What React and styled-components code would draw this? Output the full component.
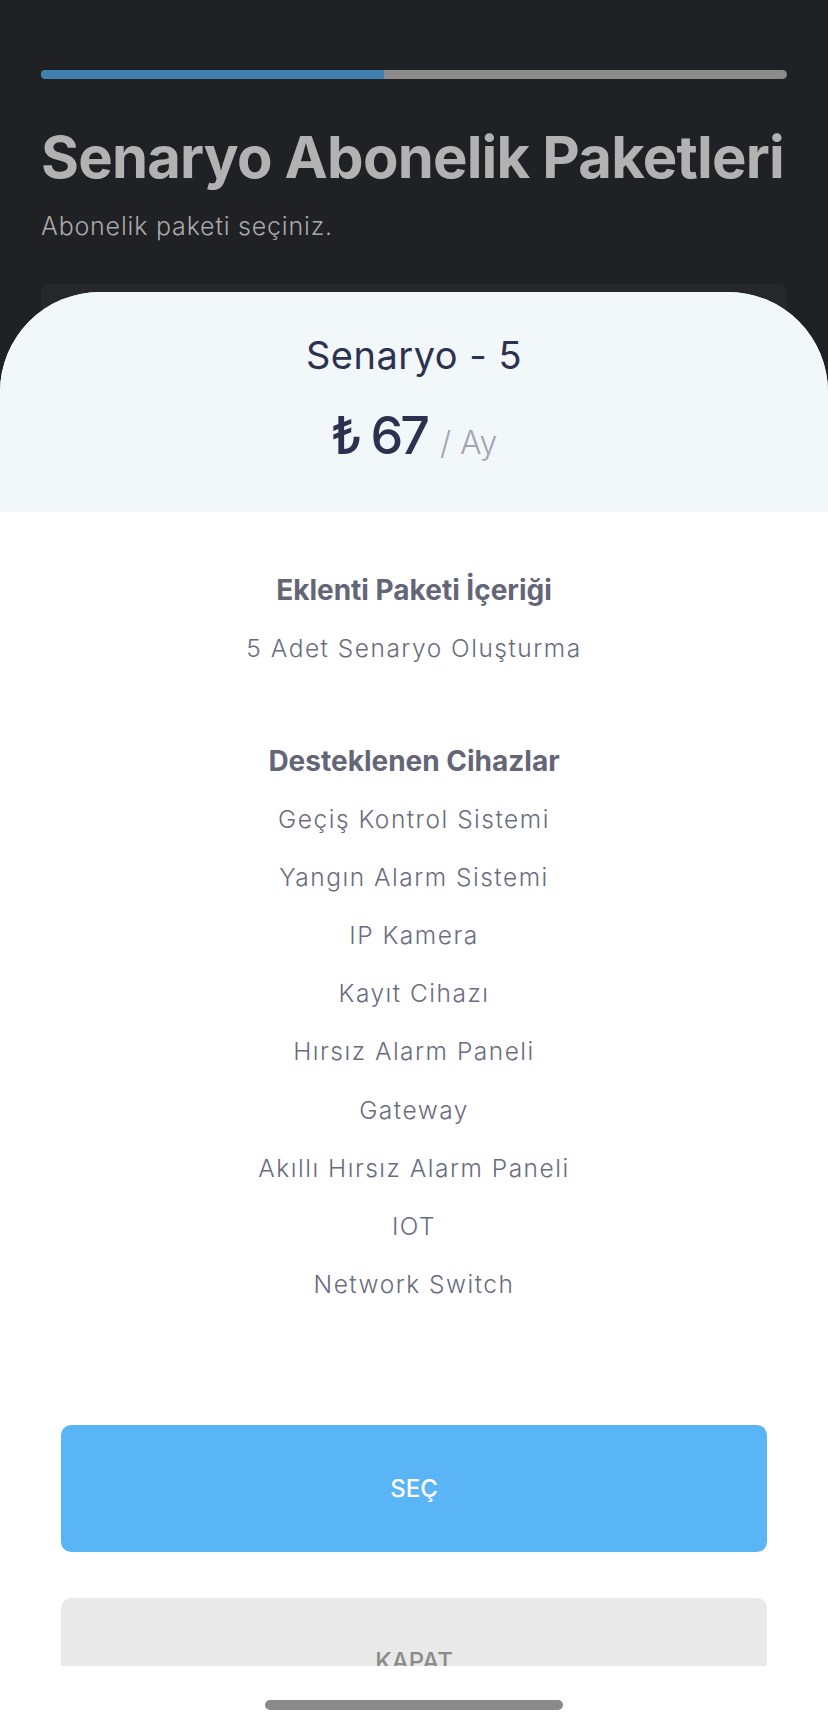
import React from "react";
import styled, { createGlobalStyle } from "styled-components";

const devices = [
  "Geçiş Kontrol Sistemi",
  "Yangın Alarm Sistemi",
  "IP Kamera",
  "Kayıt Cihazı",
  "Hırsız Alarm Paneli",
  "Gateway",
  "Akıllı Hırsız Alarm Paneli",
  "IOT",
  "Network Switch",
];

function App() {
  return (
    <>
      <GlobalStyle />
      <Page>
        <Header>
          <ProgressTrack>
            <ProgressFill style={{ width: "46%" }} />
          </ProgressTrack>
          <Title>Senaryo Abonelik Paketleri</Title>
          <Subtitle>Abonelik paketi seçiniz.</Subtitle>
          <PackageCard />
        </Header>

        <Sheet>
          <SheetHeader>
            <PackageName>Senaryo - 5</PackageName>
            <PriceRow>
              <Price>₺ 67</Price>
              <Period>/ Ay</Period>
            </PriceRow>
          </SheetHeader>

          <SheetBody>
            <Section>
              <SectionTitle>Eklenti Paketi İçeriği</SectionTitle>
              <Item>5 Adet Senaryo Oluşturma</Item>
            </Section>
            <Section>
              <SectionTitle>Desteklenen Cihazlar</SectionTitle>
              {devices.map((d) => (
                <Item key={d}>{d}</Item>
              ))}
            </Section>
            <Actions>
              <ActionBtn variant="primary">SEÇ</ActionBtn>
              <ActionBtn variant="secondary">KAPAT</ActionBtn>
            </Actions>
          </SheetBody>

          <HomeArea>
            <HomeIndicator />
          </HomeArea>
        </Sheet>
      </Page>
    </>
  );
}

export default App;

const GlobalStyle = createGlobalStyle`
  * { box-sizing: border-box; }
  html, body {
    margin: 0;
    padding: 0;
    background: #1f2124;
    font-family: "Inter", "Noto Sans", sans-serif;
  }
`;

const Page = styled.div`
  position: relative;
  width: 828px;
  height: 1726px;
  overflow: hidden;
  background: #1f2124;
`;

const Header = styled.div`
  display: flex;
  flex-direction: column;
  padding: 70px 41px 0;
`;

const ProgressTrack = styled.div`
  height: 9px;
  border-radius: 5px;
  background: #8b8b8c;
  overflow: hidden;
`;

const ProgressFill = styled.div`
  height: 100%;
  background: #3f80b0;
`;

const Title = styled.h1`
  margin: 46px 0 0;
  font-size: 58px;
  line-height: 64px;
  font-weight: 700;
  letter-spacing: -0.8px;
  color: #b2b2b2;
  white-space: nowrap;
`;

const Subtitle = styled.p`
  margin: 21px 0 0;
  font-size: 25px;
  line-height: 32px;
  font-weight: 300;
  letter-spacing: 0.8px;
  color: #a9a9a9;
`;

const PackageCard = styled.div`
  margin-top: 42px;
  height: 300px;
  border-radius: 8px;
  background: #25272b;
`;

const Sheet = styled.div`
  position: absolute;
  top: 292px;
  left: 0;
  right: 0;
  bottom: 0;
  display: flex;
  flex-direction: column;
  background: #ffffff;
  border-radius: 100px 100px 0 0;
  overflow: hidden;
`;

const SheetHeader = styled.div`
  height: 220px;
  flex-shrink: 0;
  display: flex;
  flex-direction: column;
  align-items: center;
  padding-top: 40px;
  background: #f2f7fa;
`;

const PackageName = styled.div`
  font-size: 38px;
  line-height: 46px;
  font-weight: 400;
  letter-spacing: 0.5px;
  color: #2c3150;
`;

const PriceRow = styled.div`
  display: flex;
  align-items: baseline;
  gap: 13px;
  margin-top: 28px;
`;

const Price = styled.span`
  font-size: 52px;
  line-height: 60px;
  font-weight: 500;
  letter-spacing: -3px;
  color: #2c3150;
`;

const Period = styled.span`
  font-size: 32px;
  font-weight: 300;
  color: #a3a6b1;
`;

const SheetBody = styled.div`
  height: 1154px;
  flex-shrink: 0;
  overflow: hidden;
  display: flex;
  flex-direction: column;
  align-items: stretch;
  padding-top: 49px;
  text-align: center;
`;

const Section = styled.div`
  display: flex;
  flex-direction: column;
  & + & {
    margin-top: 55px;
  }
`;

const SectionTitle = styled.div`
  font-size: 28px;
  line-height: 58px;
  font-weight: 700;
  color: #636677;
`;

const Item = styled.div`
  font-size: 24.5px;
  line-height: 58.1px;
  font-weight: 300;
  letter-spacing: 1.5px;
  color: #6a6d7e;
`;

const Actions = styled.div`
  display: flex;
  flex-direction: column;
  gap: 46px;
  padding: 112px 61px 0;
`;

const ActionBtn = styled.button`
  height: 127px;
  border: none;
  border-radius: 10px;
  font-family: "Inter", "Noto Sans", sans-serif;
  font-size: 24px;
  font-weight: 500;
  background: ${(p) => (p.variant === "primary" ? "#5ab5f6" : "#e9e9e9")};
  color: ${(p) => (p.variant === "primary" ? "#ffffff" : "#8b8b8b")};
  flex-shrink: 0;
`;

const HomeArea = styled.div`
  flex: 1;
  display: flex;
  justify-content: center;
  padding-top: 34px;
  background: #ffffff;
`;

const HomeIndicator = styled.div`
  width: 298px;
  height: 10px;
  border-radius: 5px;
  background: #8a8a8a;
`;
